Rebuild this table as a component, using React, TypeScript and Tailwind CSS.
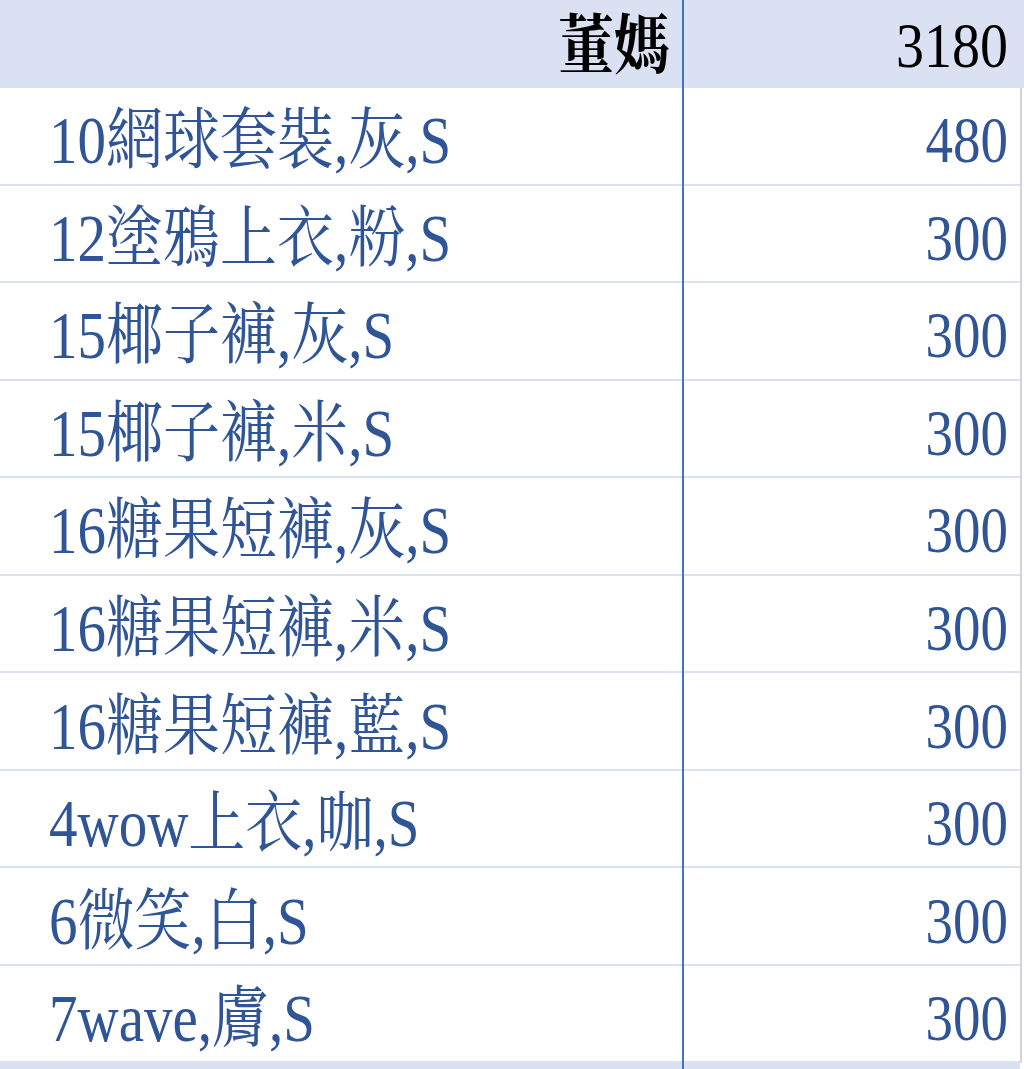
import React from "react";

const rows: [string, string][] = [
  ["10網球套裝,灰,S", "480"],
  ["12塗鴉上衣,粉,S", "300"],
  ["15椰子褲,灰,S", "300"],
  ["15椰子褲,米,S", "300"],
  ["16糖果短褲,灰,S", "300"],
  ["16糖果短褲,米,S", "300"],
  ["16糖果短褲,藍,S", "300"],
  ["4wow上衣,咖,S", "300"],
  ["6微笑,白,S", "300"],
  ["7wave,膚,S", "300"],
];

const font = {
  fontFamily:
    '"Liberation Serif", "Noto Serif CJK TC", "Noto Sans CJK TC", serif',
};

export default function App() {
  return (
    <div className="w-[1024px] h-[1069px] overflow-hidden bg-white" style={font}>
      {/* header */}
      <div className="flex h-[88px] bg-[#dae1f2]">
        <div className="w-[682px] flex items-center justify-end pr-[12px] pt-[4px]">
          <span className="text-[56px] leading-none font-bold text-black scale-y-[1.15]">董媽</span>
        </div>
        <div className="w-[2px] bg-[#4472c4]" />
        <div className="w-[336px] flex items-center justify-end pr-[12px] pt-[2px]">
          <span className="text-[56px] leading-none text-black scale-y-[1.15]">3180</span>
        </div>
        <div className="flex-1" />
      </div>
      {rows.map(([name, val], i) => (
        <div key={i} className="flex h-[97.55px]">
          <div className="w-[682px] flex flex-col">
            <div className="flex-1 flex items-center pl-[49px] pt-[8px]">
              <span className="text-[57px] leading-none text-[#2f5597] scale-y-[1.18] whitespace-nowrap">
                {name}
              </span>
            </div>
            <div className="h-[2px] bg-[#dae1f2]" />
          </div>
          <div className="w-[2px] bg-[#4472c4]" />
          <div className="w-[336px] flex flex-col">
            <div className="flex-1 flex items-center justify-end pr-[12px] pt-[8px]">
              <span className="text-[55px] leading-none text-[#2f5597] scale-y-[1.2]">{val}</span>
            </div>
            <div className="h-[2px] bg-[#dae1f2]" />
          </div>
          <div className="w-[2px] bg-[#d4d4d4]" />
          <div className="flex-1" />
        </div>
      ))}
      <div className="flex h-[10px]">
        <div className="w-[682px] bg-[#dae1f2]" />
        <div className="w-[2px] bg-[#4472c4]" />
        <div className="w-[336px] bg-[#dae1f2]" />
        <div className="flex-1" />
      </div>
    </div>
  );
}
